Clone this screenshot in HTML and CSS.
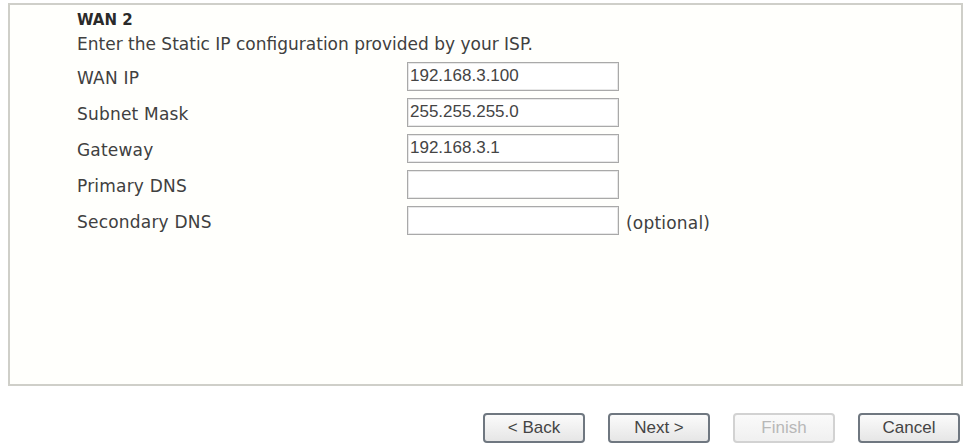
FILE: index.html
```html
<!DOCTYPE html>
<html>
<head>
<meta charset="utf-8">
<link rel="stylesheet" href="styles.css">
</head>
<body>
<div class="page">
  <div class="panel">
    <div class="title">WAN 2</div>
    <div class="intro">Enter the Static IP configuration provided by your ISP.</div>
    <div class="form">
      <div class="label">WAN IP</div>
      <div class="field"><input class="ip" type="text" value="192.168.3.100"></div>
      <div class="label">Subnet Mask</div>
      <div class="field"><input class="ip" type="text" value="255.255.255.0"></div>
      <div class="label">Gateway</div>
      <div class="field"><input class="ip" type="text" value="192.168.3.1"></div>
      <div class="label">Primary DNS</div>
      <div class="field"><input class="ip" type="text" value=""></div>
      <div class="label">Secondary DNS</div>
      <div class="field"><input class="ip" type="text" value=""><span class="note">(optional)</span></div>
    </div>
  </div>
  <div class="buttons">
    <button class="btn">&lt; Back</button>
    <button class="btn">Next &gt;</button>
    <button class="btn disabled" disabled>Finish</button>
    <button class="btn">Cancel</button>
  </div>
</div>
</body>
</html>
```
FILE: styles.css
```css
html, body {
  margin: 0;
  padding: 0;
  background: #ffffff;
}
.page {
  width: 965px;
  height: 448px;
  padding-top: 3px;
  box-sizing: border-box;
  font-family: "DejaVu Sans", Verdana, sans-serif;
  color: #404040;
}
.panel {
  margin-left: 8px;
  width: 955px;
  height: 383px;
  box-sizing: border-box;
  border: 2px solid #cfcfc9;
  background: #fffffc;
  padding: 5px 0 0 67px;
}
.title {
  font-family: Tahoma, "DejaVu Sans", sans-serif;
  font-weight: bold;
  font-size: 15px;
  line-height: 20px;
  color: #2a2a2a;
}
.intro {
  font-size: 17px;
  line-height: 28px;
}
.form {
  display: grid;
  grid-template-columns: 330px auto;
  grid-auto-rows: 36px;
  align-items: center;
}
.label {
  font-size: 17px;
  letter-spacing: 0.2px;
  padding-top: 3px;
}
.field {
  display: flex;
  align-items: center;
}
.ip {
  width: 212px;
  height: 29px;
  box-sizing: border-box;
  border: 1px solid #a9a9a9;
  box-shadow: inset 0 0 0 1px #e8e8e8;
  padding: 0 2px;
  margin: 0;
  font-family: "Liberation Sans", Arial, sans-serif;
  font-size: 17px;
  color: #444;
  background: #fff;
}
.note {
  margin-left: 7px;
  font-size: 17px;
  letter-spacing: 0.2px;
  position: relative;
  top: 3px;
}
.buttons {
  display: flex;
  justify-content: flex-end;
  gap: 23px;
  padding: 27px 5px 0 0;
}
.btn {
  width: 102px;
  height: 30px;
  border: 2px solid #6f7780;
  border-radius: 4px;
  background: linear-gradient(#fbfbfb, #e6e6e6);
  font-family: "Liberation Sans", Arial, sans-serif;
  font-size: 17px;
  color: #444;
  padding: 0;
}
.btn.disabled {
  border-color: #d2d2d2;
  color: #b8b8b8;
  background: linear-gradient(#fafafa, #f0f0f0);
}
```
